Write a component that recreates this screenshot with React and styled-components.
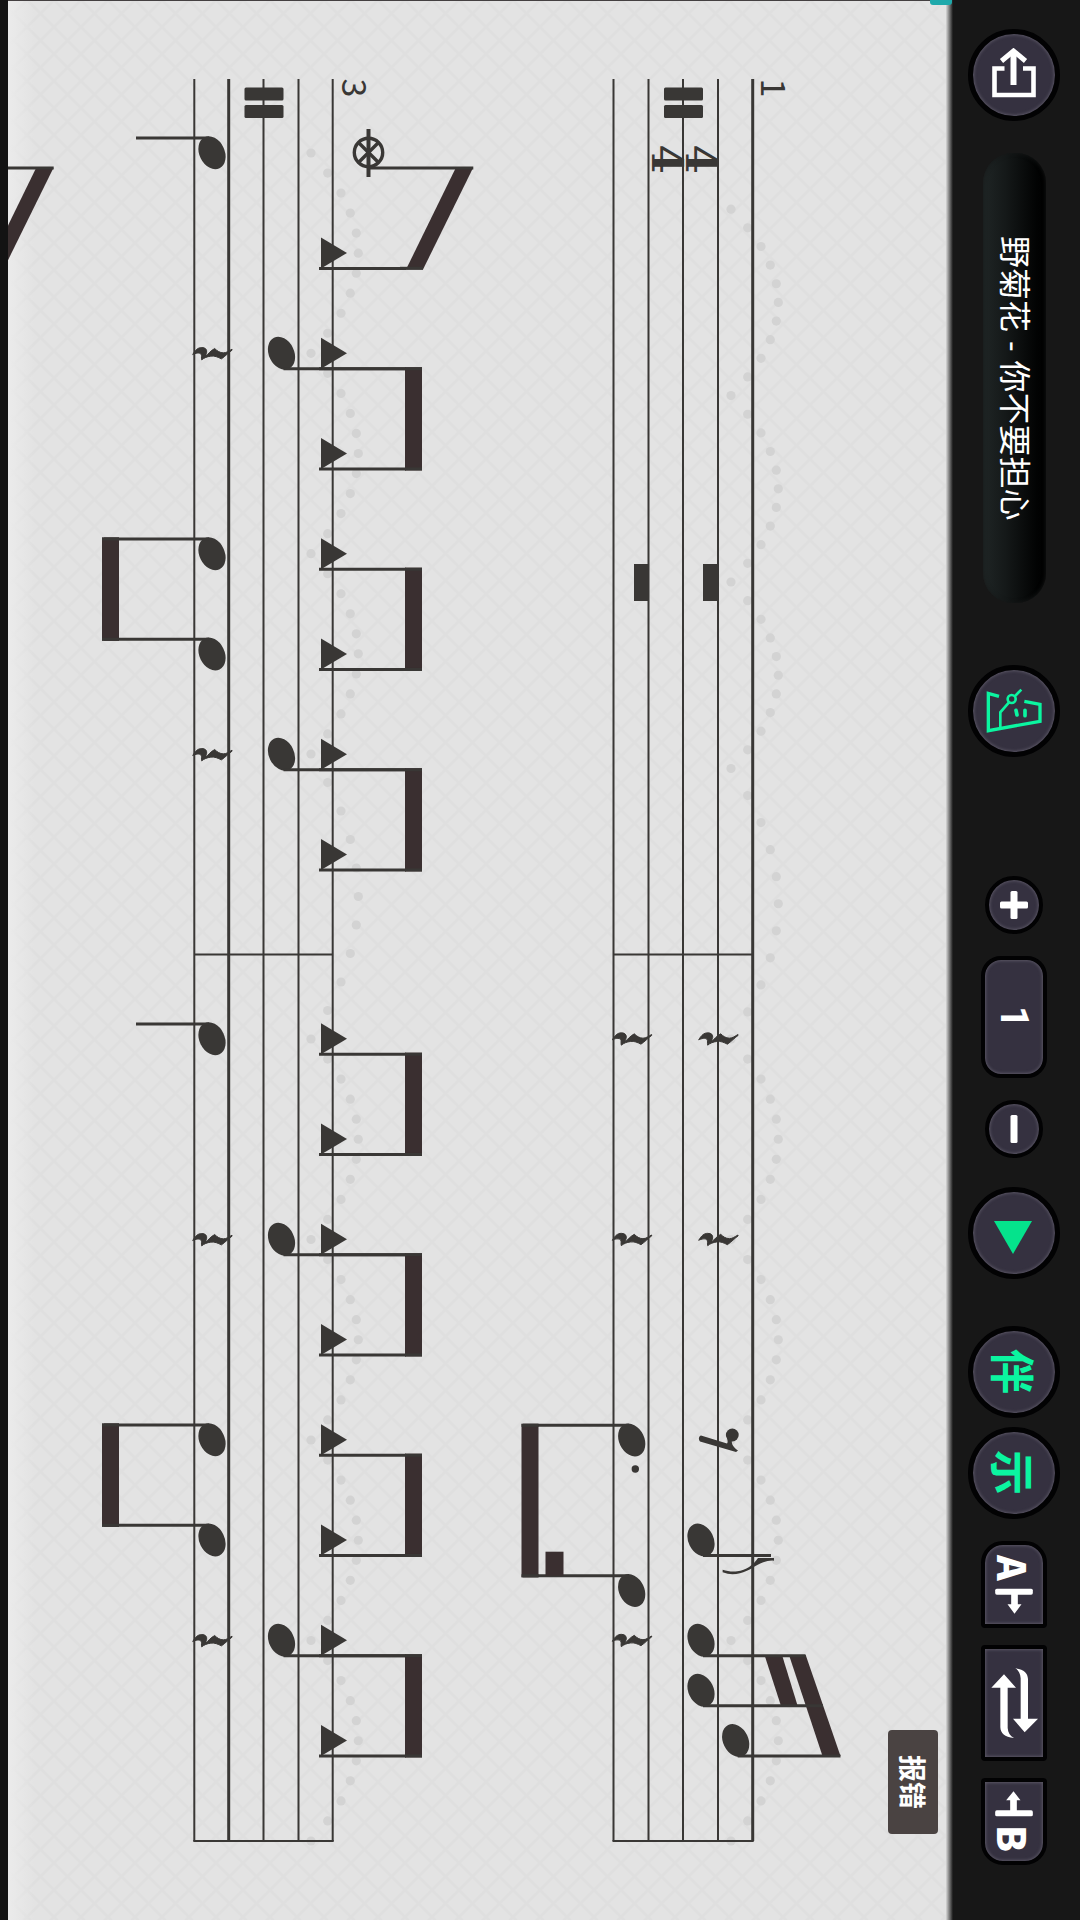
import React from "react";
import styled, { createGlobalStyle, css } from "styled-components";

const INK = "#393735";
const BEAM = "#3a2f30";
const DOT = "#d3d3d3";
const MINT = "#0bf5a0";

const GlobalStyle = createGlobalStyle`
  *, *::before, *::after { box-sizing: border-box; }
  body {
    margin: 0;
    background: #171717;
    font-family: "Noto Sans CJK SC", "Noto Sans", sans-serif;
  }
`;

/* ---------- page shell ---------- */

const Screen = styled.main`
  display: flex;
  min-height: 100vh;
  background: #171717;
`;

const Margin = styled.div`
  flex: 0 0 8px;
  background: #131313;
`;

const Paper = styled.section`
  position: relative;
  flex: 1;
  min-width: 0;
  background: #e3e3e3;
`;

const Sheet = styled.svg`
  display: block;
  width: 100%;
  height: auto;
`;

const Playhead = styled.div`
  position: absolute;
  top: 0;
  right: -6px;
  width: 22px;
  height: 5px;
  border-radius: 0 0 3px 3px;
  background: #1fa9ab;
`;

const ReportButton = styled.button`
  position: absolute;
  right: 8px;
  bottom: 86px;
  display: flex;
  align-items: center;
  justify-content: center;
  width: 50px;
  height: 104px;
  padding: 0;
  border: 0;
  border-radius: 4px;
  background: #4a4342;
  color: #fff;
  font: 700 27px/32px "Noto Sans CJK SC", sans-serif;
  writing-mode: vertical-rl;
  text-orientation: sideways;
`;

/* ---------- toolbar ---------- */

const Toolbar = styled.nav`
  flex: 0 0 134px;
  display: flex;
  flex-direction: column;
  align-items: center;
  padding: 29px 0 40px 2px;
  background: linear-gradient(to right, #d8d8d8, #171717 7px);
`;

const Group = styled.div`
  display: flex;
  flex-direction: column;
  align-items: center;
  gap: ${(p) => p.$gap || 0}px;
  margin-top: ${(p) => p.$before || 0}px;
`;

const face = css`
  display: flex;
  flex-direction: column;
  align-items: center;
  justify-content: center;
  padding: 0;
  border: solid #020203;
  background: #353140;
  color: #fff;
  box-shadow: inset 0 0 3px 1px #5a5664;
`;

const RoundButton = styled.button`
  ${face}
  width: ${(p) => (p.$small ? 58 : 92)}px;
  height: ${(p) => (p.$small ? 58 : 92)}px;
  border-width: ${(p) => (p.$small ? 4 : 5)}px;
  border-radius: 50%;
`;

const TallButton = styled.button`
  ${face}
  width: 66px;
  height: ${(p) => p.$height}px;
  gap: 8px;
  border-width: 4px;
  border-radius: ${(p) => p.$corners};
`;

const Title = styled.h1`
  display: flex;
  align-items: center;
  justify-content: center;
  width: 63px;
  height: 450px;
  margin: 0;
  border-radius: 30px;
  background: linear-gradient(to right, #1f2525, #151919 35%, #020303 85%, #000);
  box-shadow: inset 0 0 4px #161818;
  color: #fff;
  font: 400 32px/40px "Liberation Sans", "Noto Sans CJK SC", sans-serif;
  writing-mode: vertical-rl;
  text-orientation: sideways;
  white-space: nowrap;
`;

const Sideways = styled.span`
  writing-mode: vertical-rl;
  text-orientation: sideways;
  color: ${(p) => p.$color || "#fff"};
  font: ${(p) => p.$weight || 700} ${(p) => p.$size}px/48px ${(p) => p.$family || '"Noto Sans CJK SC"'}, sans-serif;
`;

const Icon = styled.svg`
  display: block;
  flex: none;
`;

function ShareIcon() {
  return (
    <Icon width="44" height="54" viewBox="0 0 44 54" fill="none" stroke="#fff">
      <path d="M12.500 20.500H2.500v26.500h39v-26.500h-10.500" strokeWidth="4.600" />
      <path d="M21.500 37V6" strokeWidth="6" />
      <path d="M9.500 13 21.500 3 33.500 13" strokeWidth="5" />
    </Icon>
  );
}

function MetronomeIcon() {
  return (
    <Icon width="57" height="46" viewBox="62 82 171 138" fill="none" stroke={MINT} strokeWidth="9">
      <path d="M101 107 69 98v112l155-28v-51l-47-9" strokeWidth="10" />
      <path d="M105 205v-50l26-30M148 107l20-20" strokeWidth="8" />
      <circle cx="139" cy="115" r="12" strokeWidth="8" />
      <path d="M152 149l3 14M179 149v16" strokeWidth="11" strokeLinecap="round" />
    </Icon>
  );
}

function PlusIcon() {
  return (
    <Icon width="28" height="30" viewBox="0 0 28 30" fill="#fff">
      <rect x="10.500" y="1" width="7" height="28" rx="1.500" />
      <rect x="0" y="11.500" width="28" height="7" rx="1.500" />
    </Icon>
  );
}

function MinusIcon() {
  return (
    <Icon width="8" height="28" viewBox="0 0 8 28" fill="#fff">
      <rect x="0.500" width="7" height="28" rx="1.500" />
    </Icon>
  );
}

function PlayIcon() {
  return (
    <Icon width="40" height="42" viewBox="0 0 40 42">
      <path d="M0 9h38L19 42z" fill="#05e38c" />
    </Icon>
  );
}

function ToEndIcon() {
  return (
    <Icon width="38" height="26" viewBox="107 185 113 78" fill="#fff">
      <rect x="107" y="187" width="113" height="18" rx="5" />
      <path d="M155 200h20v34h11l-21 28-21-28h11z" />
    </Icon>
  );
}

function FromStartIcon() {
  return (
    <Icon width="38" height="26" viewBox="104 784 113 78" fill="#fff">
      <rect x="104" y="842" width="113" height="18" rx="5" />
      <path d="M149 846h20v-34h11l-21-27-22 27h12z" />
    </Icon>
  );
}

function LoopIcon() {
  return (
    <Icon width="47" height="72" viewBox="90 411 141 216" fill="#fff">
      <path d="M163 415c26 2 37 14 38 32v119h30l-40 41-35-41h23V445c-1-14-6-24-16-30z" />
      <path d="M159 624c-29-2-40-14-41-32V473H91l38-40 36 40h-25v121c1 14 7 24 19 30z" />
    </Icon>
  );
}

/* ---------- score ---------- */

const FIRST_BAR = 152.7;
const SECOND_BAR = 1038.7;
const STEP = 100.25;
const beats = [0, 1, 2, 3, 4, 5, 6, 7];

const Line = ({ x1, y1, x2, y2, w = 3 }) => (
  <line x1={x1} y1={y1} x2={x2} y2={y2} stroke={INK} strokeWidth={w} />
);

function Staff({ lines, heavy }) {
  const left = lines[0];
  const right = lines[4];
  return (
    <g>
      {lines.map((x, i) => (
        <Line key={x} x1={x} y1={79} x2={x} y2={1841} w={i === heavy ? 3 : 2} />
      ))}
      <Line x1={left} y1={954.5} x2={right} y2={954.5} w={2} />
      <Line x1={left - 1} y1={1841} x2={right + 1} y2={1841} w={2} />
      <g fill={INK}>
        <rect x={lines[2] - 19} y={87.500} width={39} height={13} rx={1.500} />
        <rect x={lines[2] - 19} y={105} width={39} height={13} rx={1.500} />
      </g>
    </g>
  );
}

function Arcs({ x, marks }) {
  const rise = [0, 16.700, 30, 39.300, 45.300, 47.300, 45.300, 39.300, 30, 16.700];
  const last = marks.length - 1;
  return (
    <g fill={DOT}>
      {marks.slice(0, last).map((y, i) =>
        rise.map((dx, k) => (
          <circle key={`${i}-${k}`} cx={x + dx} cy={y + ((marks[i + 1] - y) * k) / 10} r={4.600} />
        ))
      )}
      <circle cx={x} cy={marks[last]} r={4.600} />
    </g>
  );
}

const Head = ({ x, y }) => (
  <ellipse cx={x} cy={y} rx={17.200} ry={12.600} fill={INK} transform={`rotate(64 ${x} ${y})`} />
);

/* drum note with its stem pointing left */
const KickNote = ({ x, y, to }) => (
  <g>
    <Head x={x} y={y} />
    <Line x1={to} y1={y - 14.700} x2={x - 3} y2={y - 14.700} />
  </g>
);

/* drum note with its stem pointing right */
const SnareNote = ({ x, y, to }) => (
  <g>
    <Head x={x} y={y} />
    <Line x1={x + 2} y1={y + 15.500} x2={to} y2={y + 15.500} />
  </g>
);

const HiHat = ({ y }) => (
  <g>
    <path d={`M321 ${y - 15.500}L347 ${y}L321 ${y + 15.500}z`} fill={INK} />
    <Line x1={319} y1={y + 15.500} x2={406} y2={y + 15.500} />
  </g>
);

const BeamBar = ({ x, w, from, to }) => (
  <g>
    <rect x={x} y={from - 1.500} width={w} height={to - from + 3} fill={BEAM} />
    <Line x1={x} y1={from} x2={x + w} y2={from} />
    <Line x1={x} y1={to} x2={x + w} y2={to} />
  </g>
);

/* quarter rest lying on its side */
const QuarterRest = ({ x, y }) => (
  <path
    transform={`translate(${x} ${y}) scale(0.3333)`}
    fill={INK}
    stroke={INK}
    strokeWidth="3"
    strokeLinejoin="round"
    d="M0 4C8-10 16-17 27-17 38-17 43-11 42-3 41 1 39 5 40 8 46 3 54-8 66-14 73-7 82-1 92-1 102-1 108-7 118-12L118-9C110-4 97 10 86 17 76 12 66 7 54 9 44 10 34 14 27 20 25 13 28 7 25 3 20-3 8 0 0 4z"
  />
);

function Bar({ start, crash }) {
  const at = (n) => start + n * STEP;
  return (
    <g>
      {beats.filter((n) => !(crash && n === 0)).map((n) => (
        <HiHat key={n} y={at(n)} />
      ))}
      {[0, 2, 4, 6].filter((n) => !(crash && n === 0)).map((n) => (
        <BeamBar key={n} x={405} w={17} from={at(n) + 15.500} to={at(n + 1) + 15.500} />
      ))}
      {[2, 6].map((n) => (
        <g key={n}>
          <SnareNote x={281.500} y={at(n)} to={405} />
          <QuarterRest x={192.700} y={at(n)} />
        </g>
      ))}
      <KickNote x={212} y={at(0)} to={136} />
      <KickNote x={212} y={at(4)} to={104} />
      <KickNote x={212} y={at(5)} to={104} />
      <BeamBar x={102} w={17} from={at(4) - 14.700} to={at(5) - 14.700} />
    </g>
  );
}

const SlantBeam = ({ dx = 0 }) => (
  <g transform={`translate(${dx} 0)`}>
    <path d="M455.700 168H473L423 269.500H406z" fill={BEAM} />
    <Line x1={368} y1={168} x2={473.300} y2={168} />
  </g>
);

function Crash() {
  return (
    <g>
      <g fill="none" stroke={INK} strokeWidth={3.400}>
        <circle cx={368.500} cy={152.500} r={14.200} />
        <path d="M358.500 142.500l20 20M378.500 142.500l-20 20" />
      </g>
      <Line x1={368.500} y1={129} x2={368.500} y2={177} w={4} />
      <SlantBeam />
      <Line x1={400} y1={268.300} x2={423} y2={268.300} />
    </g>
  );
}

function Intro() {
  return (
    <g>
      <rect x={703} y={564} width={15} height={37} fill={INK} />
      <rect x={634} y={564} width={15} height={37} fill={INK} />
      {[1038.500, 1239].map((y) => (
        <g key={y}>
          <QuarterRest x={612.300} y={y} />
          <QuarterRest x={698.700} y={y} />
        </g>
      ))}
      <QuarterRest x={612.300} y={1640} />

      <circle cx={732.300} cy={1435} r={6.400} fill={INK} />
      <path d="M701 1435.500L727 1443.500C729 1442 726 1437 727 1434L733 1438C730 1443 733 1447 738 1450.500L736 1452L700 1441.500C698 1439 699 1436 701 1435.500z" fill={INK} />

      <KickNote x={631.700} y={1440} to={523} />
      <KickNote x={631.700} y={1590.500} to={523} />
      <circle cx={635.300} cy={1469} r={3.700} fill={INK} />
      <BeamBar x={521.500} w={17} from={1425.300} to={1575.800} />
      <rect x={545.500} y={1551.700} width={18} height={24} fill={BEAM} />

      <SnareNote x={701} y={1540} to={771} />
      <path
        transform="translate(500 1380) scale(0.3333)"
        fill={INK}
        d="M822 534H774C760 556 738 570 712 574 694 576 682 573 668 569V577C686 584 702 584 720 580 748 574 764 556 790 547Q804 541 822 542z"
      />

      <path d="M789 1655H805.700L840.500 1756H822.500z" fill={BEAM} />
      <path d="M764.500 1655H782L797.700 1706H781z" fill={BEAM} />
      <SnareNote x={701} y={1640.300} to={805.500} />
      <SnareNote x={701} y={1690.300} to={823} />
      <SnareNote x={735.700} y={1740.500} to={840.500} />
    </g>
  );
}

function Score() {
  return (
    <Sheet viewBox="8 0 938 1920" role="img" aria-label="Drum score, bars 1 to 4">
      <defs>
        <pattern id="lattice" width="54" height="54" patternUnits="userSpaceOnUse">
          <path d="M0 0L54 54M54 0L0 54M27 0L54 27M27 0L0 27M0 27L27 54M54 27L27 54" stroke="#dcdcdc" strokeWidth="3" opacity="0.500" />
        </pattern>
        <linearGradient id="edge">
          <stop offset="0" stopColor="#ebebeb" />
          <stop offset="1" stopColor="#ebebeb" stopOpacity="0" />
        </linearGradient>
      </defs>
      <rect x="8" width="938" height="1920" fill="url(#lattice)" />
      <rect x="8" width="26" height="1920" fill="url(#edge)" />
      <rect x="8" width="938" height="1" fill="#444041" />

      <Arcs x={731} marks={[209.200, 395.600, 582, 768.500, 1039, 1239.500, 1440, 1640.500, 1841]} />
      <Arcs x={311} marks={[153, 353.300, 553.700, 754, 1039, 1239.500, 1440, 1640.500, 1841]} />

      <Staff lines={[613.500, 648.500, 683, 718, 752.700]} heavy={4} />
      <Staff lines={[194.300, 228.700, 263.500, 298.500, 332.700]} heavy={1} />

      <g fill={INK} fontFamily="'Noto Sans CJK SC', sans-serif" fontSize="34" textAnchor="middle">
        <text transform="translate(761 88) rotate(90)">1</text>
        <text transform="translate(342 88) rotate(90)">3</text>
      </g>
      <g fill={INK} fontFamily="'DejaVu Serif', serif" fontWeight="700" fontSize="42" textAnchor="middle">
        <text transform="translate(652 159) rotate(90)">4</text>
        <text transform="translate(686 159) rotate(90)">4</text>
      </g>

      <Intro />
      <Crash />
      <SlantBeam dx={-419.600} />
      <Bar start={FIRST_BAR} crash />
      <Bar start={SECOND_BAR} />
    </Sheet>
  );
}

export default function App() {
  return (
    <>
      <GlobalStyle />
      <Screen>
        <Margin />
        <Paper>
          <Score />
          <Playhead />
          <ReportButton type="button">报错</ReportButton>
        </Paper>
        <Toolbar>
          <Group $gap={32}>
            <RoundButton type="button" aria-label="Share"><ShareIcon /></RoundButton>
            <Title>野菊花 - 你不要担心</Title>
          </Group>
          <Group $before={62}>
            <RoundButton type="button" aria-label="Metronome"><MetronomeIcon /></RoundButton>
          </Group>
          <Group $before={119} $gap={22}>
            <RoundButton type="button" $small aria-label="Increase"><PlusIcon /></RoundButton>
            <TallButton type="button" $height={122} $corners="20px">
              <Sideways $size={38} $family="Roboto">1</Sideways>
            </TallButton>
            <RoundButton type="button" $small aria-label="Decrease"><MinusIcon /></RoundButton>
          </Group>
          <Group $before={29}>
            <RoundButton type="button" aria-label="Play"><PlayIcon /></RoundButton>
          </Group>
          <Group $before={47} $gap={9}>
            <RoundButton type="button"><Sideways $size={45} $color={MINT}>伴</Sideways></RoundButton>
            <RoundButton type="button"><Sideways $size={45} $color={MINT}>示</Sideways></RoundButton>
          </Group>
          <Group $before={22} $gap={17}>
            <TallButton type="button" $height={87} $corners="22px 22px 4px 4px">
              <Sideways $size={39} $weight={900}>A</Sideways>
              <ToEndIcon />
            </TallButton>
            <TallButton type="button" $height={116} $corners="4px" aria-label="Loop"><LoopIcon /></TallButton>
            <TallButton type="button" $height={87} $corners="4px 4px 22px 22px">
              <FromStartIcon />
              <Sideways $size={39} $weight={900}>B</Sideways>
            </TallButton>
          </Group>
        </Toolbar>
      </Screen>
    </>
  );
}
